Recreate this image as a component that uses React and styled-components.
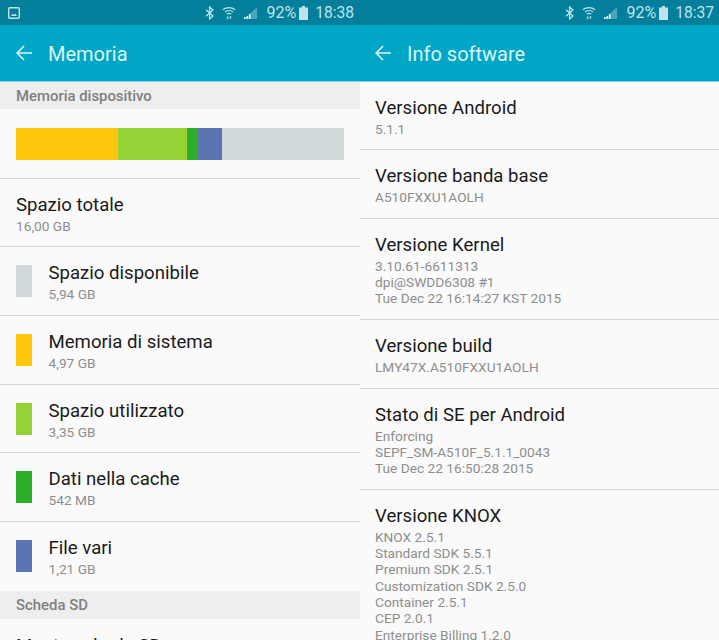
import React from "react";
import styled, { createGlobalStyle } from "styled-components";

const Global = createGlobalStyle`
  html, body { margin: 0; padding: 0; background: #fafafa; }
  body { font-family: Roboto, "Noto Sans", sans-serif; }
`;

const Screens = styled.div`
  display: grid;
  grid-template-columns: 360px 359px;
  width: 719px;
  height: 640px;
  overflow: hidden;
`;
const Screen = styled.div`
  display: flex;
  flex-direction: column;
  height: 640px;
  overflow: hidden;
  background: #fafafa;
`;
const StatusBar = styled.div`
  height: 25px;
  flex: none;
  background: #037f9b;
  color: #bfe3ec;
  display: flex;
  align-items: center;
  padding: 0 ${(p) => p.$right}px 0 8px;
`;
const Spacer = styled.div`flex: 1;`;
const Battery = styled.span`
  font-size: 16px;
  margin-left: 9px;
`;
const Clock = styled.span`
  margin-left: 7px;
  font-size: 15.6px;
`;
const AppBar = styled.div`
  height: 56px;
  flex: none;
  background: #01a5c6;
  border-bottom: 1px solid #7fd2e3;
  display: flex;
  align-items: center;
  padding-left: ${(p) => p.$left}px;
  color: #d9f6fb;
  font-size: 20px;
  gap: 16px;
`;
const AppTitle = styled.span`
  padding-top: 2px;
`;
const SectionHeader = styled.div`
  height: ${(p) => p.$h}px;
  flex: none;
  background: #eeeeee;
  color: #808080;
  font-size: 14.9px;
  font-weight: 500;
  display: flex;
  align-items: center;
  padding-left: 16px;
`;
const BarWrap = styled.div`
  height: 70px;
  flex: none;
  box-sizing: border-box;
  padding: 19px 16px 18px;
  border-bottom: 1px solid #d8d8d8;
  display: flex;
`;
const Segment = styled.div`
  height: 32px;
  width: ${(p) => p.$w}px;
  background: ${(p) => p.$c};
`;
const Row = styled.div`
  flex: none;
  box-sizing: border-box;
  height: ${(p) => p.$h}px;
  padding: ${(p) => p.$top ?? 15}px ${(p) => p.$side ?? 16}px 0;
  border-bottom: ${(p) => (p.$last ? "none" : "1px solid #d8d8d8")};
  display: flex;
  gap: 16.5px;
`;
const Swatch = styled.div`
  width: 16px;
  height: 32px;
  margin-top: 3px;
  background: ${(p) => p.$c};
  flex: none;
`;
const RowBody = styled.div`
  min-width: 0;
`;
const Title = styled.div`
  font-size: 18.6px;
  line-height: 22px;
  color: #1a1a1a;
  margin-bottom: 1.6px;
  white-space: nowrap;
`;
const Sub = styled.div`
  font-size: 13.7px;
  line-height: 16.35px;
  color: #8e8e8e;
  white-space: nowrap;
`;

const Bluetooth = () => (
  <svg width="9" height="14" viewBox="0 0 9 14" fill="none" stroke="#bfe3ec" strokeWidth="1.3">
    <path d="M1 3.8l7 6.2-3.4 3V1l3.4 3-7 6.2" />
  </svg>
);
const Wifi = () => (
  <svg width="14" height="16" viewBox="0 0 15 16" fill="none" stroke="#bfe3ec" strokeWidth="1.4" style={{ marginLeft: 8 }}>
    <path d="M1 4.6c3.600-3.200 9.400-3.200 13 0" />
    <path d="M3.200 7c2.400-2 6.200-2 8.600 0" />
    <path d="M5.300 9.200c1.300-1 3.100-1 4.400 0" />
    <path d="M6 11.500v3M5 13.300l1 1.200 1-1.200M9 14.500v-3M8 12.700l1-1.200 1 1.200" strokeWidth="0.9" />
  </svg>
);
const Signal = () => (
  <svg width="14" height="14" viewBox="0 0 14 14" style={{ marginLeft: 7 }}>
    <path d="M14 1v12H1z" fill="#bfe3ec" opacity="0.4" />
    <path d="M1 11h1.500v2H1zM3.500 10H5v3H3.500zM6 8h1.500v5H6z" fill="#e6f6f9" />
  </svg>
);
const BatteryIcon = () => (
  <svg width="9" height="14" viewBox="0 0 9 14" style={{ marginLeft: 3 }}>
    <path d="M3 0h3v1.500h3V14H0V1.500h3z" fill="#bfe3ec" />
  </svg>
);
const PictureIcon = () => (
  <svg width="12" height="12" viewBox="0 0 12 12">
    <rect x="0.700" y="0.700" width="10.600" height="10.600" rx="1" fill="none" stroke="#bfe3ec" strokeWidth="1.400" />
    <path d="M3 9l1.800-2.400L6 8l1.300-1.400L9 9z" fill="#bfe3ec" />
  </svg>
);
const BackArrow = () => (
  <svg width="16" height="16" viewBox="0 0 16 16" fill="none" stroke="#d9f6fb" strokeWidth="1.700">
    <path d="M16 8H1.500M8 1L1.200 8 8 15" />
  </svg>
);

const Status = ({ time, right, picture }) => (
  <StatusBar $right={right}>
    {picture && <PictureIcon />}
    <Spacer />
    <Bluetooth />
    <Wifi />
    <Signal />
    <Battery>92%</Battery>
    <BatteryIcon />
    <Clock>{time}</Clock>
  </StatusBar>
);

const memory = [
  { t: "Spazio disponibile", s: "5,94 GB", c: "#d2dbdc", h: 69 },
  { t: "Memoria di sistema", s: "4,97 GB", c: "#fdc70c", h: 69 },
  { t: "Spazio utilizzato", s: "3,35 GB", c: "#94d236", h: 68 },
  { t: "Dati nella cache", s: "542 MB", c: "#2dae26", h: 69 },
  { t: "File vari", s: "1,21 GB", c: "#5a74b4", h: 69, last: true },
];
const segments = [
  [102, "#fdc70c"],
  [69, "#94d236"],
  [11, "#2dae26"],
  [24, "#5a74b4"],
  [122, "#d2dbdc"],
];
const software = [
  { t: "Versione Android", s: ["5.1.1"], h: 68 },
  { t: "Versione banda base", s: ["A510FXXU1AOLH"], h: 69 },
  { t: "Versione Kernel", s: ["3.10.61-6611313", "dpi@SWDD6308 #1", "Tue Dec 22 16:14:27 KST 2015"], h: 101 },
  { t: "Versione build", s: ["LMY47X.A510FXXU1AOLH"], h: 69 },
  { t: "Stato di SE per Android", s: ["Enforcing", "SEPF_SM-A510F_5.1.1_0043", "Tue Dec 22 16:50:28 2015"], h: 101 },
  {
    t: "Versione KNOX",
    s: ["KNOX 2.5.1", "Standard SDK 5.5.1", "Premium SDK 2.5.1", "Customization SDK 2.5.0", "Container 2.5.1", "CEP 2.0.1", "Enterprise Billing 1.2.0"],
    h: 160,
    last: true,
  },
];

export default function App() {
  return (
    <>
      <Global />
      <Screens>
        <Screen>
          <Status time="18:38" right={6} picture />
          <AppBar $left={16}>
            <BackArrow />
            <AppTitle>Memoria</AppTitle>
          </AppBar>
          <SectionHeader $h={27}>Memoria dispositivo</SectionHeader>
          <BarWrap>
            {segments.map(([w, c]) => (
              <Segment key={c} $w={w} $c={c} />
            ))}
          </BarWrap>
          <Row $h={68}>
            <RowBody>
              <Title>Spazio totale</Title>
              <Sub>16,00 GB</Sub>
            </RowBody>
          </Row>
          {memory.map((m) => (
            <Row key={m.t} $h={m.h} $last={m.last}>
              <Swatch $c={m.c} />
              <RowBody>
                <Title>{m.t}</Title>
                <Sub>{m.s}</Sub>
              </RowBody>
            </Row>
          ))}
          <SectionHeader $h={28}>Scheda SD</SectionHeader>
          <Row $h={60} $top={16} $last>
            <RowBody>
              <Title>Monta scheda SD</Title>
            </RowBody>
          </Row>
        </Screen>
        <Screen>
          <Status time="18:37" right={5} />
          <AppBar $left={15}>
            <BackArrow />
            <AppTitle>Info software</AppTitle>
          </AppBar>
          {software.map((r) => (
            <Row key={r.t} $h={r.h} $side={15} $last={r.last}>
              <RowBody>
                <Title>{r.t}</Title>
                {r.s.map((l) => (
                  <Sub key={l}>{l}</Sub>
                ))}
              </RowBody>
            </Row>
          ))}
        </Screen>
      </Screens>
    </>
  );
}
